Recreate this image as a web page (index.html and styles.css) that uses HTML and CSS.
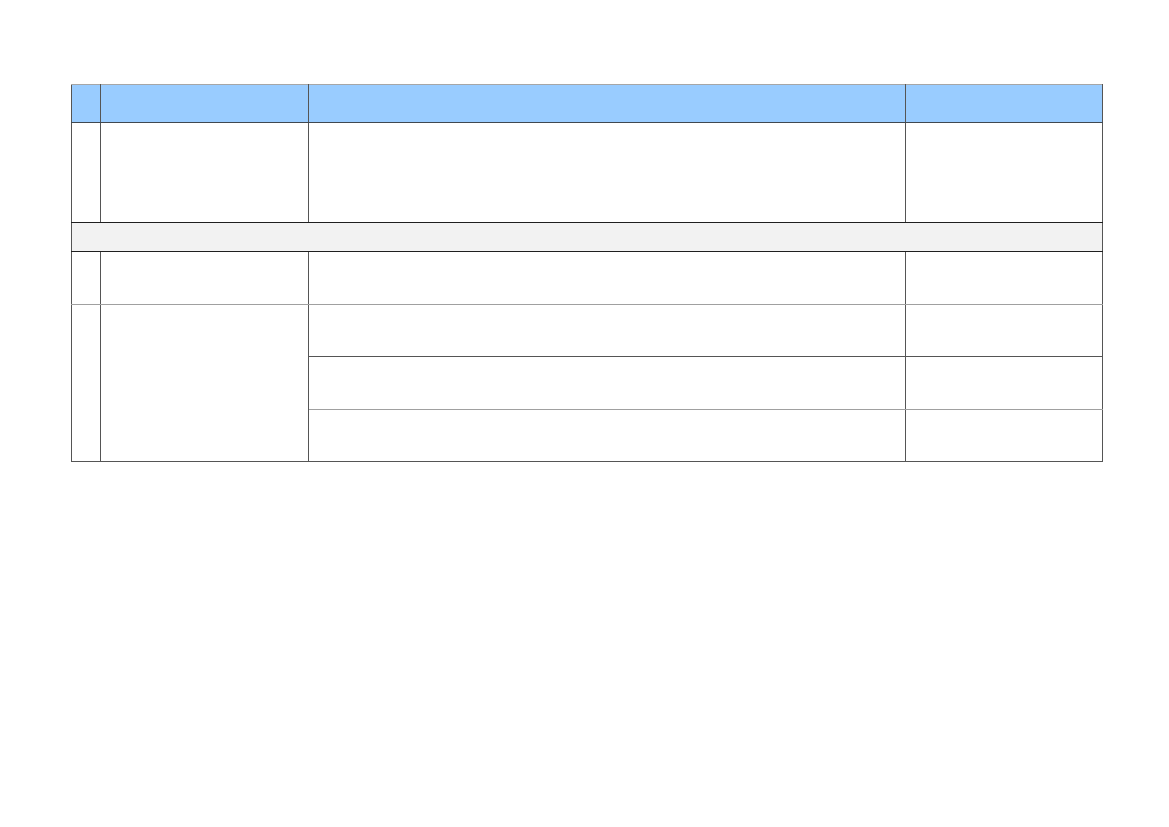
FILE: index.html
```html
<!DOCTYPE html>
<html lang="en">
<head>
<meta charset="utf-8">
<title>Table</title>
<link rel="stylesheet" href="styles.css">
</head>
<body>
<div class="page">
  <table class="grid">
    <colgroup>
      <col class="c1">
      <col class="c2">
      <col class="c3">
      <col class="c4">
    </colgroup>
    <thead>
      <tr class="head">
        <th></th><th></th><th></th><th></th>
      </tr>
    </thead>
    <tbody>
      <tr class="tall">
        <td></td><td></td><td></td><td></td>
      </tr>
      <tr class="group">
        <td colspan="4"></td>
      </tr>
      <tr class="row light-bottom">
        <td></td><td></td><td></td><td></td>
      </tr>
      <tr class="row dark-bottom short">
        <td rowspan="3" class="span"></td><td rowspan="3" class="span"></td><td></td><td></td>
      </tr>
      <tr class="row light-bottom">
        <td></td><td></td>
      </tr>
      <tr class="row last">
        <td></td><td></td>
      </tr>
    </tbody>
  </table>
</div>
</body>
</html>
```

FILE: styles.css
```css
html, body {
  margin: 0;
  padding: 0;
  background: #ffffff;
  font-family: "Liberation Sans", Arial, sans-serif;
}

.page {
  padding: 84px 0 0 71px;
}

.grid {
  border-collapse: collapse;
  table-layout: fixed;
  width: 1031px;
}

.c1 { width: 29px; }
.c2 { width: 208px; }
.c3 { width: 597px; }
.c4 { width: 197px; }

.grid th,
.grid td {
  padding: 0;
  border-left: 1px solid #555555;
  border-right: 1px solid #555555;
}

.head th {
  height: 37px;
  background: #99ccff;
  border-top: 1px solid #a6a6a6;
  border-bottom: 1px solid #404850;
}

.tall td {
  height: 99px;
  border-bottom: 1px solid #1f1f1f;
}

.group td {
  height: 28px;
  background: #f2f2f2;
  border-bottom: 1px solid #1f1f1f;
}

.row td {
  height: 52px;
}

.row.short td {
  height: 51px;
}

.light-bottom td {
  border-bottom: 1px solid #a0a0a0;
}

.dark-bottom td {
  border-bottom: 1px solid #555555;
}

.row td.span {
  border-bottom: 1px solid #555555;
}

.last td {
  height: 51px;
  border-bottom: 1px solid #555555;
}
```
